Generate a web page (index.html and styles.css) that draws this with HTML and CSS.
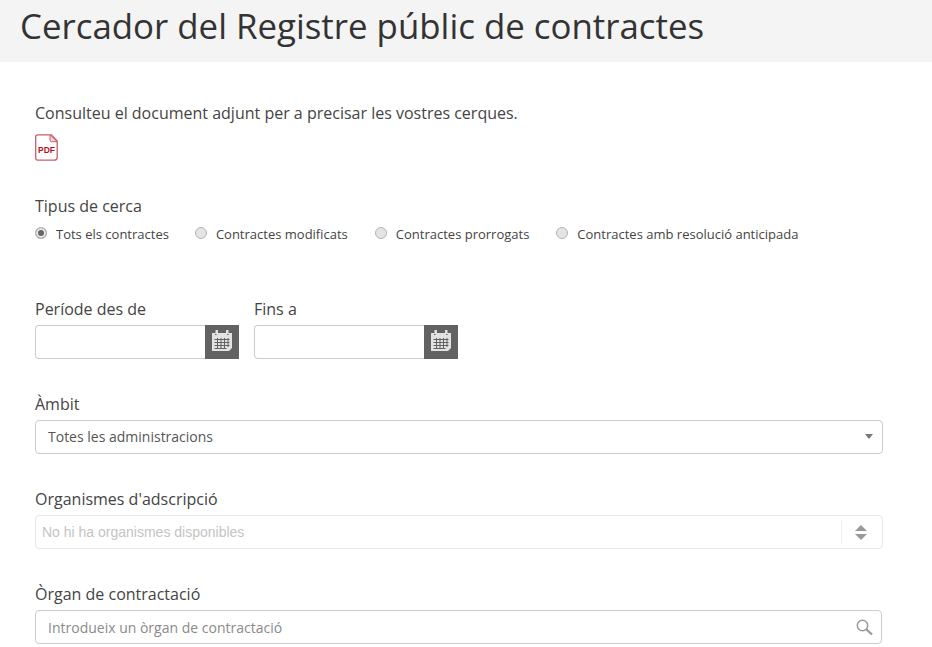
FILE: index.html
```html
<!DOCTYPE html>
<html lang="ca">
<head>
    <meta charset="UTF-8">
    <meta name="viewport" content="width=device-width, initial-scale=1.0">
    <title>Cercador del Registre públic de contractes</title>
    <link rel="stylesheet" href="styles.css">
</head>
<body>
    <div class="page-title">
        <h1>Cercador del Registre públic de contractes</h1>
    </div>

    <div class="content">
        <p class="intro">Consulteu el document adjunt per a precisar les vostres cerques.</p>
        <a class="pdf-link" href="#" aria-label="PDF">
            <svg width="23" height="27" viewBox="0 0 23 27">
                <path d="M3 .8h13.500l5.700 6.200v16.200a3 3 0 0 1-3 3H3a2.300 2.300 0 0 1-2.300-2.300V3A2.300 2.300 0 0 1 3 .8z" fill="#fff" stroke="#c8606a" stroke-width="1.300"/>
                <path d="M15 .8v5.400a1.500 1.500 0 0 0 1.500 1.500h5.700z" fill="#f3d5d8" stroke="#c8606a" stroke-width="1"/>
                <text x="11.500" y="19" text-anchor="middle" class="pdf-text">PDF</text>
            </svg>
        </a>

        <!-- tipus de cerca -->
        <div class="search-type">
            <div class="label">Tipus de cerca</div>
            <div class="radios">
                <label class="radio radio-first"><span class="dot checked"></span>Tots els contractes</label>
                <label class="radio"><span class="dot"></span>Contractes modificats</label>
                <label class="radio"><span class="dot"></span>Contractes prorrogats</label>
                <label class="radio"><span class="dot"></span>Contractes amb resolució anticipada</label>
            </div>
        </div>

        <!-- dates -->
        <div class="dates">
            <div class="date-field">
                <div class="label">Període des de</div>
                <div class="date-input">
                    <div class="date-box"></div>
                    <div class="cal-btn">
                        <svg width="20" height="21" viewBox="0 0 20 21">
                            <path d="M0 3h20v15l-3 3H0z" fill="#e2e2e2"/>
                            <path d="M3.500 0h2.500v4H3.500zM14 0h2.500v4H14z" fill="#e2e2e2"/>
                            <path d="M3 4.500h1.500M15 4.500h1.500" stroke="#626262" stroke-width="1"/>
                            <path d="M2.500 9.500h15M2.500 12.500h15M2.500 15.500h15M2.500 18.500h12M5.500 8v11M9 8v11M12.500 8v11M16 8v9" stroke="#626262" stroke-width="1"/>
                        </svg>
                    </div>
                </div>
            </div>
            <div class="date-field">
                <div class="label">Fins a</div>
                <div class="date-input">
                    <div class="date-box"></div>
                    <div class="cal-btn">
                        <svg width="20" height="21" viewBox="0 0 20 21">
                            <path d="M0 3h20v15l-3 3H0z" fill="#e2e2e2"/>
                            <path d="M3.500 0h2.500v4H3.500zM14 0h2.500v4H14z" fill="#e2e2e2"/>
                            <path d="M3 4.500h1.500M15 4.500h1.500" stroke="#626262" stroke-width="1"/>
                            <path d="M2.500 9.500h15M2.500 12.500h15M2.500 15.500h15M2.500 18.500h12M5.500 8v11M9 8v11M12.500 8v11M16 8v9" stroke="#626262" stroke-width="1"/>
                        </svg>
                    </div>
                </div>
            </div>
        </div>

        <div class="field">
            <div class="label">Àmbit</div>
            <div class="box select-box">
                <span>Totes les administracions</span>
                <span class="caret"></span>
            </div>
        </div>

        <div class="field">
            <div class="label">Organismes d'adscripció</div>
            <div class="box box-disabled">
                <span class="disabled-text">No hi ha organismes disponibles</span>
                <span class="updown">
                    <span class="up"></span>
                    <span class="down"></span>
                </span>
            </div>
        </div>

        <div class="field">
            <div class="label">Òrgan de contractació</div>
            <div class="box box-search">
                <span class="placeholder">Introdueix un òrgan de contractació</span>
                <svg width="17" height="16" viewBox="0 0 17 16">
                    <circle cx="6.500" cy="6.500" r="5.200" fill="none" stroke="#999" stroke-width="1.500"/>
                    <path d="M10.500 10.500l5.500 5" stroke="#999" stroke-width="2.200"/>
                </svg>
            </div>
        </div>
    </div>
</body>
</html>
```

FILE: styles.css
```css
body {
    margin: 0;
    font-family: "Open Sans", sans-serif;
    background-color: #fff;
    color: #444;
    overflow: hidden;
}
h1 {
    margin: 0;
    font-size: 34.850px;
    font-weight: 400;
    line-height: 52px;
    color: #333;
}
.page-title {
    height: 62px;
    padding-left: 20px;
    background-color: #f4f4f4;
}
.content {
    padding: 40px 49px 0 35px;
}
.intro {
    margin: 0;
    font-size: 16px;
    line-height: 22px;
}
.pdf-link {
    display: block;
    height: 27px;
    margin-top: 10px;
}
.pdf-text {
    font-family: "Liberation Sans", sans-serif;
    font-size: 8.500px;
    font-weight: 700;
    fill: #b3121d;
}
.label {
    font-size: 16px;
    line-height: 22px;
}
.search-type {
    margin-top: 34px;
}
.radios {
    display: flex;
    gap: 27px;
    margin-top: 8px;
}
.radio {
    display: flex;
    align-items: center;
    font-size: 13px;
    line-height: 18px;
}
.radio-first {
    margin-right: -1px;
}
.dot {
    box-sizing: border-box;
    width: 12px;
    height: 12px;
    margin: -3px 9px 0 0;
    border: 1px solid #b5b5b5;
    border-radius: 50%;
    background-color: #e4e4e4;
}
.dot.checked {
    background-color: #666;
    box-shadow: inset 0 0 0 2px #e8e8e8;
}
.dates {
    display: flex;
    gap: 15px;
    margin-top: 55px;
}
.date-field .label {
    margin-bottom: 5px;
}
.date-input {
    display: flex;
    width: 204px;
    height: 34px;
}
.date-box {
    flex: 1;
    border: 1px solid #ccc;
    border-right: none;
    border-radius: 4px 0 0 4px;
}
.cal-btn {
    display: flex;
    align-items: center;
    justify-content: center;
    width: 34px;
    padding-bottom: 3px;
    box-sizing: border-box;
    background-color: #626262;
}
.field {
    margin-top: 34px;
}
.field .label {
    margin-bottom: 5px;
}
.box {
    display: flex;
    align-items: center;
    box-sizing: border-box;
    height: 34px;
    border: 1px solid #ccc;
    border-radius: 4px;
    font-size: 14px;
}
.select-box {
    justify-content: space-between;
    padding: 0 9px 2px 12px;
    color: #555;
}
.caret {
    width: 0;
    height: 0;
    border-top: 5px solid #777;
    border-left: 4px solid transparent;
    border-right: 4px solid transparent;
}
.box-disabled {
    justify-content: space-between;
    padding-left: 6px;
    border-color: #e6e6e6;
}
.disabled-text {
    font-family: "Liberation Sans", sans-serif;
    color: #c4c4c4;
}
.updown {
    display: flex;
    flex-direction: column;
    align-items: center;
    justify-content: center;
    gap: 3px;
    width: 37px;
    height: 24px;
    padding-right: 3px;
    border-left: 1px solid #eee;
}
.up, .down {
    width: 0;
    height: 0;
    border-left: 6px solid transparent;
    border-right: 6px solid transparent;
}
.up {
    border-bottom: 6px solid #999;
}
.down {
    border-top: 6px solid #999;
}
.box-search {
    justify-content: space-between;
    width: 847px;
    padding: 0 8px 0 12px;
}
.placeholder {
    color: #8a8a8a;
}
```
